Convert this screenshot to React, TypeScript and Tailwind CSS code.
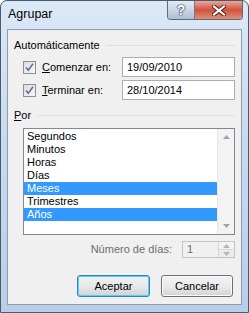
import React from "react";

const items = [
  { label: "Segundos", selected: false },
  { label: "Minutos", selected: false },
  { label: "Horas", selected: false },
  { label: "Días", selected: false },
  { label: "Meses", selected: true },
  { label: "Trimestres", selected: false },
  { label: "Años", selected: true },
];

const CheckBox = () => (
  <span className="flex h-[13px] w-[13px] items-center justify-center border border-[#8f8f8f] bg-gradient-to-br from-[#dcdcdc] to-[#f7f7f7]">
    <svg width="11" height="11" viewBox="0 0 11 11">
      <path d="M2 5.5 L4.3 8.3 L9 1.8" fill="none" stroke="#5a6f96" strokeWidth="1.5" />
    </svg>
  </span>
);

const Arrow = ({ up, color = "#a3a3a3" }: { up?: boolean; color?: string }) => (
  <svg width="7" height="4" viewBox="0 0 7 4">
    <path d={up ? "M0 4 L3.5 0 L7 4 Z" : "M0 0 L3.5 4 L7 0 Z"} fill={color} />
  </svg>
);

const GroupHeader = ({ children }: { children: React.ReactNode }) => (
  <div className="flex h-[13px] items-center pl-[6px] pr-[6px]">
    <span className="leading-[13px]">{children}</span>
    <span className="ml-[6px] h-px flex-1 bg-[#d5dfe5]" />
  </div>
);

export default function App() {
  return (
    <div
      className="flex h-[313px] w-[249px] flex-col rounded-t-[7px] border border-[#4b5a6c] bg-gradient-to-b from-[#dbe8f6] via-[#c6d9ef] to-[#b9cfe8] text-[11px] text-black"
      style={{ fontFamily: '"Liberation Sans", Arial, sans-serif' }}
    >
      {/* title bar */}
      <div className="relative flex h-[28px] shrink-0 items-start">
        <span className="ml-[7px] mt-[6px] text-[12.5px] leading-[15px] text-black">Agrupar</span>
        <div className="ml-auto mr-[5px] flex h-[19px] overflow-hidden rounded-b-[4px] border border-t-0 border-[#5d6b7e]">
          <div className="flex w-[27px] items-center justify-center border-r border-[#6d7b8e] bg-gradient-to-b from-[#e2ebf5] via-[#c9d6e6] to-[#aebfd4]">
            <span
              className="text-[14px] font-bold leading-none text-white"
              style={{ textShadow: "0 0 1px #2c3a4c, 0 0 1px #2c3a4c, 0 0 2px #2c3a4c" }}
            >
              ?
            </span>
          </div>
          <div className="flex w-[47px] items-center justify-center bg-gradient-to-b from-[#e8a79b] via-[#d0513b] to-[#e08f79]">
            <svg width="14" height="11" viewBox="0 0 14 11">
              <path d="M2 1.5 L12 9.5 M12 1.5 L2 9.5" stroke="#4a1a12" strokeWidth="4" strokeLinecap="square" />
              <path d="M2 1.5 L12 9.5 M12 1.5 L2 9.5" stroke="#ffffff" strokeWidth="2.2" strokeLinecap="square" />
            </svg>
          </div>
        </div>
      </div>

      {/* client area */}
      <div className="mx-[6px] mb-[7px] flex flex-1 flex-col border border-[#8c9db3] bg-[#f0f0f0] pt-[9px]">
        <GroupHeader>Automáticamente</GroupHeader>

        <div className="mt-[5px] flex h-[20px] items-center pl-[15px] pr-[6px]">
          <CheckBox />
          <span className="ml-[6px]">
            <span className="underline">C</span>omenzar en:
          </span>
          <div className="ml-auto flex h-[20px] w-[113px] items-center border border-[#abadb3] bg-white pl-[4px]">
            19/09/2010
          </div>
        </div>

        <div className="mt-[3px] flex h-[20px] items-center pl-[15px] pr-[6px]">
          <CheckBox />
          <span className="ml-[6px]">
            <span className="underline">T</span>erminar en:
          </span>
          <div className="ml-auto flex h-[20px] w-[113px] items-center border border-[#abadb3] bg-white pl-[4px]">
            28/10/2014
          </div>
        </div>

        <div className="mt-[9px]">
          <GroupHeader>
            <span className="underline">P</span>or
          </GroupHeader>
        </div>

        <div className="ml-[15px] mr-[6px] mt-[6px] flex h-[107px] border border-[#828790] bg-white">
          <div className="flex-1 pt-[1px]">
            {items.map((it) => (
              <div
                key={it.label}
                className={
                  it.selected
                    ? "h-[13px] bg-[#3399ff] pl-[3px] leading-[13px] text-white"
                    : "h-[13px] pl-[3px] leading-[13px]"
                }
              >
                {it.label}
              </div>
            ))}
          </div>
          <div className="flex w-[17px] flex-col items-center justify-between border-l border-[#e8e8e8] bg-[#f3f3f3] py-[6px]">
            <Arrow up />
            <Arrow />
          </div>
        </div>

        <div className="mt-[6px] flex h-[17px] items-center justify-end pr-[6px]">
          <span className="text-[#6d6d6d]">Número de días:</span>
          <div className="ml-[10px] flex h-[17px] w-[53px] border border-[#c4c4c4] bg-[#f0f0f0]">
            <span className="flex-1 pl-[4px] leading-[15px] text-[#6d6d6d]">1</span>
            <div className="flex w-[16px] flex-col border-l border-[#d8d8d8]">
              <div className="flex flex-1 items-center justify-center border-b border-[#d8d8d8] bg-[#f4f4f4]">
                <Arrow up color="#b5b5b5" />
              </div>
              <div className="flex flex-1 items-center justify-center bg-[#ececec]">
                <Arrow color="#b5b5b5" />
              </div>
            </div>
          </div>
        </div>

        <div className="mt-[17px] flex justify-end gap-[11px] pr-[8px]">
          <button className="flex h-[22px] w-[73px] items-center justify-center rounded-[3px] border border-[#3c7fb1] bg-gradient-to-b from-[#f2f2f2] via-[#e9e9e9] to-[#d2d2d2] shadow-[inset_0_0_0_1px_#48d7fb]">
            Aceptar
          </button>
          <button className="flex h-[22px] w-[72px] items-center justify-center rounded-[3px] border border-[#707070] bg-gradient-to-b from-[#f2f2f2] via-[#ebebeb] to-[#d3d3d3] shadow-[inset_0_0_0_1px_#fcfcfc]">
            Cancelar
          </button>
        </div>
      </div>
    </div>
  );
}
